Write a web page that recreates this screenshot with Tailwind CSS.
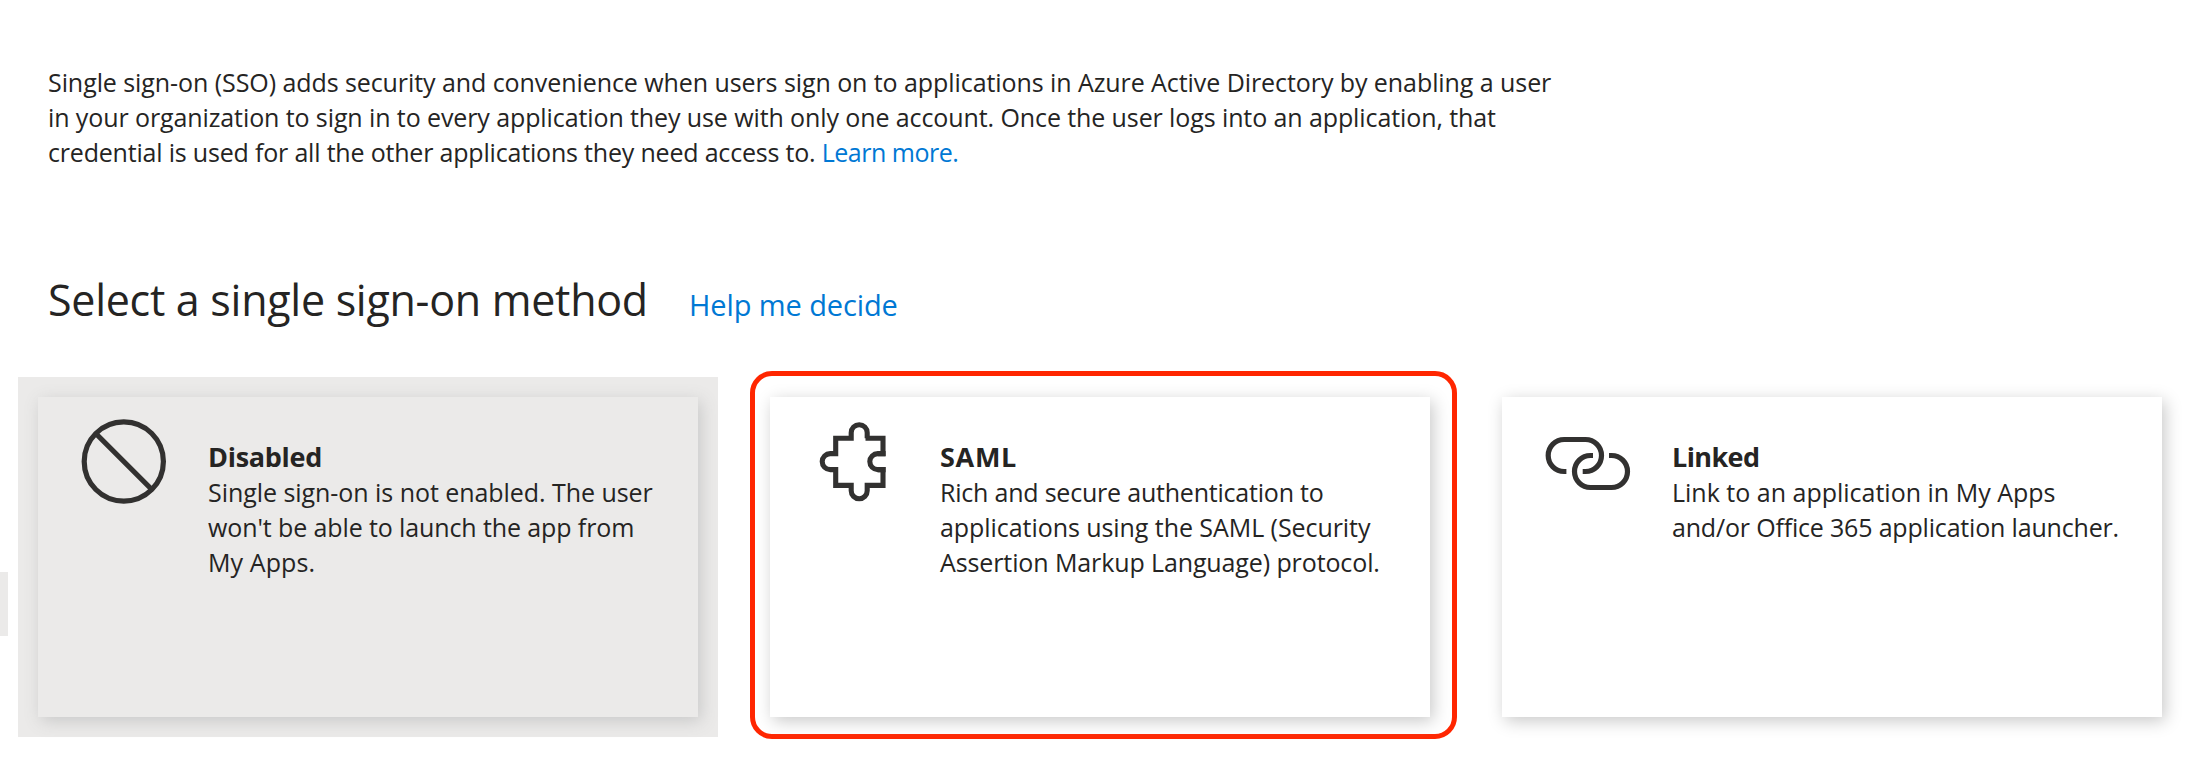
<!DOCTYPE html>
<html lang="en">
<head>
<meta charset="utf-8">
<title>Single sign-on</title>
<script src="https://cdn.jsdelivr.net/npm/@tailwindcss/browser@4"></script>
</head>
<body class="w-[2200px] h-[764px] overflow-hidden bg-white font-['Open_Sans',sans-serif] text-[#252423]">
<main class="flex flex-col pt-[65px]">
  <p class="ml-12 text-[25px] leading-[35px] whitespace-nowrap">
    <span class="block tracking-[-0.073px]">Single sign-on (SSO) adds security and convenience when users sign on to applications in Azure Active Directory by enabling a user</span>
    <span class="block tracking-[-0.1px]">in your organization to sign in to every application they use with only one account. Once the user logs into an application, that</span>
    <span class="block tracking-[-0.19px]">credential is used for all the other applications they need access to. <a class="text-[#0078d4] tracking-[-0.5px]">Learn more.</a></span>
  </p>

  <div class="ml-12 mt-[100px] flex items-baseline gap-[41px] whitespace-nowrap">
    <h1 class="w-[600px] text-[43px] leading-[60px] tracking-[-0.28px]">Select a single sign-on method</h1>
    <a class="text-[29px] leading-[40px] tracking-[-0.1px] text-[#0078d4]">Help me decide</a>
  </div>

  <div class="mt-[41px] flex items-center">
    <div class="w-2 h-16 mt-[98px] bg-[#ebeae9]"></div>

    <section class="ml-[10px] mt-[6px] mb-[2px] w-[700px] h-[360px] p-5 bg-[#ebeae9]">
      <div class="flex h-[320px] w-[660px] bg-[#ebeae9] shadow-[3px_4px_16px_#c8c8c8]">
        <svg class="ml-[43px] mt-[22px] shrink-0" width="86" height="86" viewBox="0 0 86 86" fill="none" stroke="#323130" stroke-width="5.2">
          <circle cx="42.8" cy="42.5" r="39.6"/><path d="M14.8 14.5L70.8 70.5"/>
        </svg>
        <div class="ml-[41px] mt-[42px] text-[25px] leading-[35px] whitespace-nowrap">
          <h2 class="text-[27px] leading-[36px] font-bold tracking-[-0.3px]">Disabled</h2>
          <p><span class="block tracking-[-0.05px]">Single sign-on is not enabled. The user</span><span class="block tracking-[-0.11px]">won't be able to launch the app from</span><span class="block tracking-[0.1px]">My Apps.</span></p>
        </div>
      </div>
    </section>

    <section class="ml-8 w-[707px] h-[368px] rounded-[22px] border-5 border-[#ff2600] pl-[15px] pt-[21px]">
      <div class="flex h-[320px] w-[660px] bg-white shadow-[3px_4px_16px_#c8c8c8]">
        <svg class="ml-[43px] mt-[22px] shrink-0" width="86" height="86" viewBox="0 0 86 86" fill="none" stroke="#323130" stroke-width="5.1">
          <path d="M52.5 19.2H70V34.6H64.8A8 8 0 0 0 64.8 50.6H70V66.4H54.2V71.7A8 8 0 0 1 38.2 71.7V66.4H22.7V50.6H17.2A8 8 0 0 1 17.2 34.6H22.7V19.2H38.2V13.7A8 8 0 0 1 54.2 13.7V19.2" />
          <path d="M64.8 34.6H72.6M64.8 50.6H72.6"/>
        </svg>
        <div class="ml-[41px] mt-[42px] text-[25px] leading-[35px] whitespace-nowrap">
          <h2 class="text-[27px] leading-[36px] font-bold tracking-[0.7px]">SAML</h2>
          <p><span class="block tracking-[-0.21px]">Rich and secure authentication to</span><span class="block tracking-[-0.06px]">applications using the SAML (Security</span><span class="block tracking-[-0.11px]">Assertion Markup Language) protocol.</span></p>
        </div>
      </div>
    </section>

    <section class="ml-[45px] mt-1 flex h-[320px] w-[660px] bg-white shadow-[3px_4px_16px_#c8c8c8]">
      <svg class="ml-[43px] mt-[22px] shrink-0" width="86" height="86" viewBox="0 0 86 86" fill="none" stroke="#323130" stroke-width="5.2">
        <path d="M21.4 52.5H19.2A16 16 0 0 1 19.2 20.5H40.5A16 16 0 0 1 40.5 52.5H37.7"/>
        <path d="M48 36.5H45.5A16 16 0 0 0 45.5 68.5H66.5A16 16 0 0 0 66.5 36.5H64" />
      </svg>
      <div class="ml-[41px] mt-[42px] text-[25px] leading-[35px] whitespace-nowrap">
        <h2 class="text-[27px] leading-[36px] font-bold tracking-[-0.6px]">Linked</h2>
        <p><span class="block">Link to an application in My Apps</span><span class="block tracking-[-0.18px]">and/or Office 365 application launcher.</span></p>
      </div>
    </section>
  </div>
</main>
</body>
</html>
